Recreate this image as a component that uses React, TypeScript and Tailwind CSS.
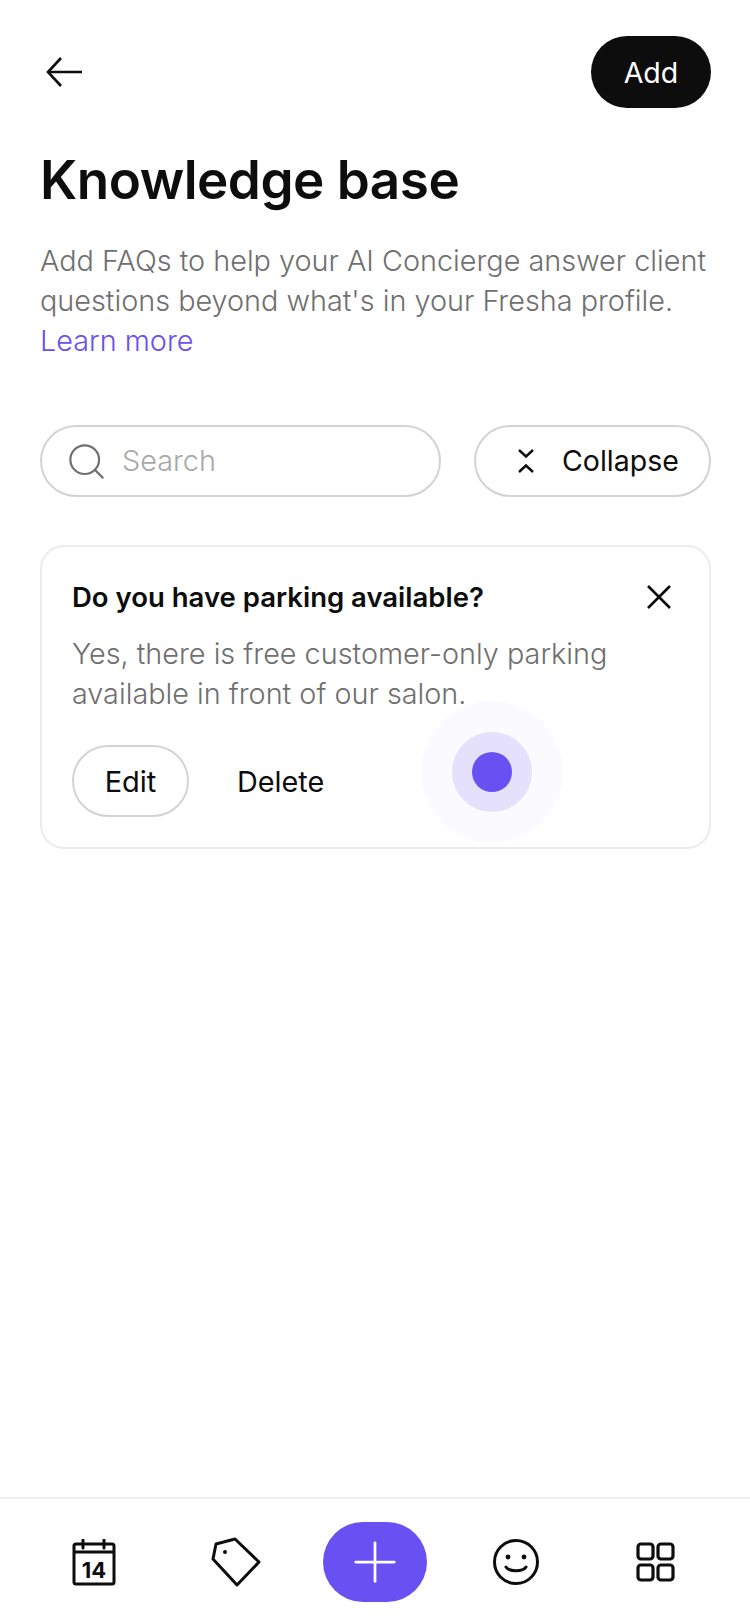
import React from 'react'
import { Search, Plus } from 'lucide-react'

const font = { fontFamily: 'Inter, "Noto Sans", sans-serif' }

const BackIcon = () => (
  <svg width="38" height="32" viewBox="0 0 38 32" fill="none" stroke="#0d0d0d" strokeWidth="2.6">
    <path d="M37 16H3" />
    <path d="M16 2L3 16l13 14" />
  </svg>
)

const CloseIcon = () => (
  <svg width="26" height="26" viewBox="0 0 26 26" fill="none" stroke="#0d0d0d" strokeWidth="2.6">
    <path d="M2 2l22 22M24 2L2 24" />
  </svg>
)

const CollapseIcon = () => (
  <svg width="16" height="24" viewBox="0 0 16 24" fill="none" stroke="#0d0d0d" strokeWidth="2.4">
    <path d="M1 1l7 6.5L15 1" />
    <path d="M1 23l7-6.5 7 6.5" />
  </svg>
)

const CalendarIcon = () => (
  <svg width="44" height="47" viewBox="0 0 44 47" fill="none" stroke="#0d0d0d" strokeWidth="3" strokeLinejoin="round">
    <rect x="2" y="5" width="40" height="40" rx="2" />
    <path d="M2 13h40" />
    <path d="M11 1v8M32 1v8" strokeLinecap="round" />
    <text x="22" y="39" textAnchor="middle" fontSize="22" fontWeight="700" fill="#0d0d0d" stroke="none" fontFamily="Inter, sans-serif">14</text>
  </svg>
)

const TagIcon = () => (
  <svg width="50" height="50" viewBox="0 0 50 50" fill="none" stroke="#0d0d0d" strokeWidth="3" strokeLinejoin="round">
    <path d="M2 22L5 7l19-5 24 23-22 23z" />
    <circle cx="14" cy="15" r="2" fill="#0d0d0d" stroke="none" />
  </svg>
)

const SmileIcon = () => (
  <svg width="46" height="46" viewBox="0 0 46 46" fill="none" stroke="#0d0d0d" strokeWidth="3" strokeLinecap="round">
    <circle cx="23" cy="23" r="21.5" />
    <circle cx="15" cy="18" r="2.4" fill="#0d0d0d" stroke="none" />
    <circle cx="31" cy="18" r="2.4" fill="#0d0d0d" stroke="none" />
    <path d="M13 28c3 5 17 5 20 0" />
  </svg>
)

const GridIcon = () => (
  <svg width="39" height="40" viewBox="0 0 39 40" fill="none" stroke="#0d0d0d" strokeWidth="3.2">
    <rect x="2" y="2" width="15" height="15" rx="3" />
    <rect x="22" y="2" width="15" height="15" rx="3" />
    <rect x="2" y="23" width="15" height="15" rx="3" />
    <rect x="22" y="23" width="15" height="15" rx="3" />
  </svg>
)

export default function App() {
  return (
    <div className="relative flex h-[1624px] w-[750px] flex-col overflow-hidden bg-white text-[#0d0d0d]" style={font}>
      <div className="flex-1 pt-9 pr-[39px] pl-10">
        <div className="flex items-center justify-between">
          <div className="ml-[5px]"><BackIcon /></div>
          <button className="flex h-[72px] w-[120px] items-center justify-center rounded-full bg-[#0d0d0d] pt-0.5 text-[28.5px] font-normal text-white">
            Add
          </button>
        </div>

        <h1 className="mt-[39px] text-[53px] leading-[66px] font-semibold tracking-[-0.5px]">Knowledge base</h1>

        <p className="mt-[28px] text-[28.8px] leading-10 font-light text-[#6f6f6f]">
          Add FAQs to help your AI Concierge answer client questions beyond what's in your Fresha profile.
          <br />
          <span className="text-[#6950f3]">Learn more</span>
        </p>

        <div className="mt-16 flex gap-[33px]">
          <div className="flex h-[72px] flex-1 items-center gap-[14px] rounded-full border-2 border-[#d3d3d3] pl-[23px]">
            <Search size={43} strokeWidth={1.2} className="text-[#6f6f6f]" />
            <span className="text-[28.8px] font-light text-[#a8a8a8]">Search</span>
          </div>
          <button className="flex h-[72px] w-[237px] items-center gap-7 rounded-full border-2 border-[#d3d3d3] pl-[42px] text-[28.5px] font-normal">
            <CollapseIcon />
            Collapse
          </button>
        </div>

        <div className="mt-12 h-[304px] rounded-3xl border-2 border-[#ececec] px-[30px] pt-8">
          <div className="flex items-center justify-between">
            <h2 className="text-[27.5px] leading-9 font-semibold">Do you have parking available?</h2>
            <div className="mr-[7px]"><CloseIcon /></div>
          </div>
          <p className="mt-[19px] text-[28.8px] leading-10 font-light text-[#6f6f6f]">
            Yes, there is free customer-only parking available in front of our salon.
          </p>
          <div className="mt-[31px] flex items-center gap-12">
            <button className="flex h-[72px] w-[117px] items-center justify-center rounded-full border-2 border-[#d3d3d3] pt-0.5 text-[29px] font-normal">
              Edit
            </button>
            <span className="pt-0.5 text-[28.8px] font-normal">Delete</span>
          </div>
        </div>
      </div>

      <nav className="flex h-[127px] items-start border-t-2 border-[#eeeeee] pt-[23px]">
        <div className="flex h-20 w-[187px] items-center justify-center"><CalendarIcon /></div>
        <div className="ml-6 flex h-20 w-[50px] items-center justify-center"><TagIcon /></div>
        <div className="ml-[62px] flex h-20 w-[104px] items-center justify-center rounded-full bg-[#6950f3]">
          <Plus size={66} strokeWidth={1} className="text-white" />
        </div>
        <div className="ml-[66px] flex h-20 w-[46px] items-center justify-center"><SmileIcon /></div>
        <div className="ml-[97px] flex h-20 w-[39px] items-center justify-center"><GridIcon /></div>
      </nav>

      {/* tap indicator */}
      <div className="absolute top-[701px] left-[421px] flex h-[142px] w-[142px] items-center justify-center rounded-full bg-[#6950f3]/[0.03]">
        <div className="flex h-20 w-20 items-center justify-center rounded-full bg-[#6950f3]/[0.14]">
          <div className="h-10 w-10 rounded-full bg-[#6950f3]" />
        </div>
      </div>
    </div>
  )
}
